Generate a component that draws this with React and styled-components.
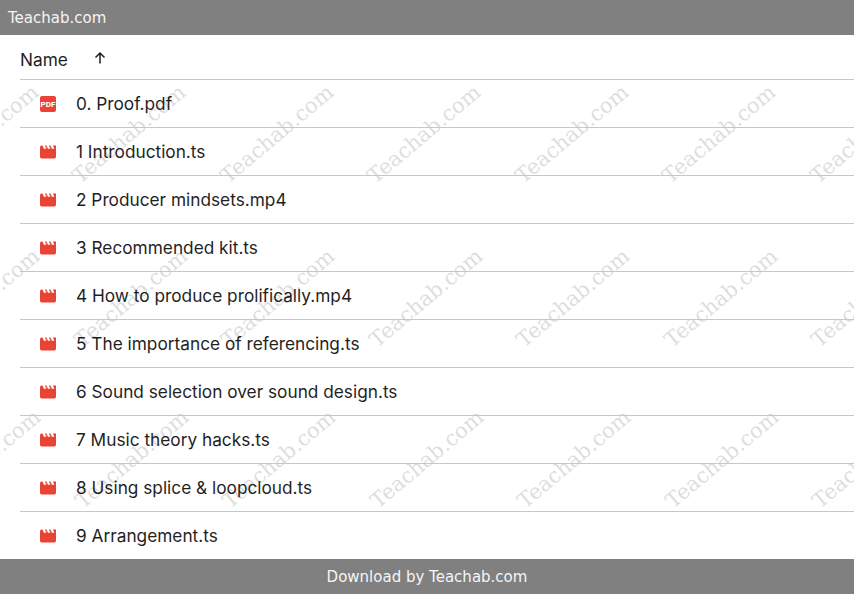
import styled, { createGlobalStyle } from "styled-components";

const Global = createGlobalStyle`
  html, body {
    margin: 0;
    padding: 0;
    background: #fff;
    overflow: hidden;
  }
`;

const Page = styled.div`
  position: relative;
  width: 854px;
  height: 594px;
  display: flex;
  flex-direction: column;
  overflow: hidden;
`;

const Bar = styled.div`
  position: relative;
  height: 35px;
  flex: none;
  background: #808080;
  color: #f5f5f5;
  font-family: "DejaVu Sans", sans-serif;
  font-size: 15px;
  display: flex;
  align-items: center;
  justify-content: ${(p) => (p.$center ? "center" : "flex-start")};
  padding: 0 8px;
`;

const List = styled.div`
  position: relative;
  flex: 1;
  padding-left: 20px;
  font-family: Inter, sans-serif;
  font-size: 17.25px;
  color: #1f1f1f;
`;

const HeadRow = styled.div`
  height: 45px;
  box-sizing: border-box;
  padding-top: 4px;
  border-bottom: 1px solid #c7c7c7;
  display: flex;
  align-items: center;
`;

const Arrow = styled.svg`
  width: 16px;
  height: 16px;
  margin-left: 24px;
  margin-top: -2px;
`;

const Row = styled.div`
  height: ${(p) => (p.$last ? "47px" : "48px")};
  box-sizing: border-box;
  display: flex;
  align-items: center;
  border-bottom: ${(p) => (p.$last ? "none" : "1px solid #c7c7c7")};
`;

const IconBox = styled.svg`
  width: 16px;
  height: 16px;
  margin-left: 20px;
  margin-right: 20px;
  flex: none;
`;

const Overlay = styled.div`
  position: absolute;
  inset: 0;
  pointer-events: none;
`;

const Mark = styled.span`
  position: absolute;
  font-family: "DejaVu Serif", serif;
  font-size: 21px;
  color: #000;
  opacity: 0.13;
  white-space: nowrap;
  transform: translate(-50%, -50%) rotate(-40deg);
`;

const PdfIcon = () => (
  <IconBox viewBox="0 0 16 16">
    <rect width="16" height="16" rx="2" fill="#ea4335" />
    <text x="8" y="11" textAnchor="middle" fontSize="8" fontWeight="800" fontFamily="Roboto, sans-serif" fill="#fff">PDF</text>
  </IconBox>
);

const VideoIcon = () => (
  <IconBox viewBox="2 2 20 20">
    <path
      d="M18 4l2 4h-3l-2-4h-2l2 4h-3l-2-4H8l2 4H7L5 4H4c-1.1 0-1.99.9-1.99 2L2 18c0 1.1.9 2 2 2h16c1.1 0 2-.9 2-2V4h-4z"
      fill="#ea4335"
    />
  </IconBox>
);

const files = [
  "0. Proof.pdf",
  "1 Introduction.ts",
  "2 Producer mindsets.mp4",
  "3 Recommended kit.ts",
  "4 How to produce prolifically.mp4",
  "5 The importance of referencing.ts",
  "6 Sound selection over sound design.ts",
  "7 Music theory hacks.ts",
  "8 Using splice & loopcloud.ts",
  "9 Arrangement.ts",
];

const marks = [];
[
  [134, 571.5],
  [298, 573],
  [459, 574],
].forEach(([y, x0], r) => {
  for (let i = -4; i <= 2; i++) {
    marks.push({ key: `${r}-${i}`, x: x0 + i * 147.5, y });
  }
});

export default function App() {
  return (
    <Page>
      <Global />
      <Overlay>
        {marks.map((m) => (
          <Mark key={m.key} style={{ left: m.x, top: m.y }}>Teachab.com</Mark>
        ))}
      </Overlay>
      <Bar>Teachab.com</Bar>
      <List>
        <HeadRow>
          Name
          <Arrow viewBox="0 0 16 16">
            <path d="M8 13.5V3M3.5 7.5 8 3l4.5 4.5" fill="none" stroke="#1f1f1f" strokeWidth="1.5" />
          </Arrow>
        </HeadRow>
        {files.map((name, i) => (
          <Row key={name} $last={i === files.length - 1}>
            {i === 0 ? <PdfIcon /> : <VideoIcon />}
            {name}
          </Row>
        ))}
      </List>
      <Bar $center>Download by Teachab.com</Bar>
    </Page>
  );
}
